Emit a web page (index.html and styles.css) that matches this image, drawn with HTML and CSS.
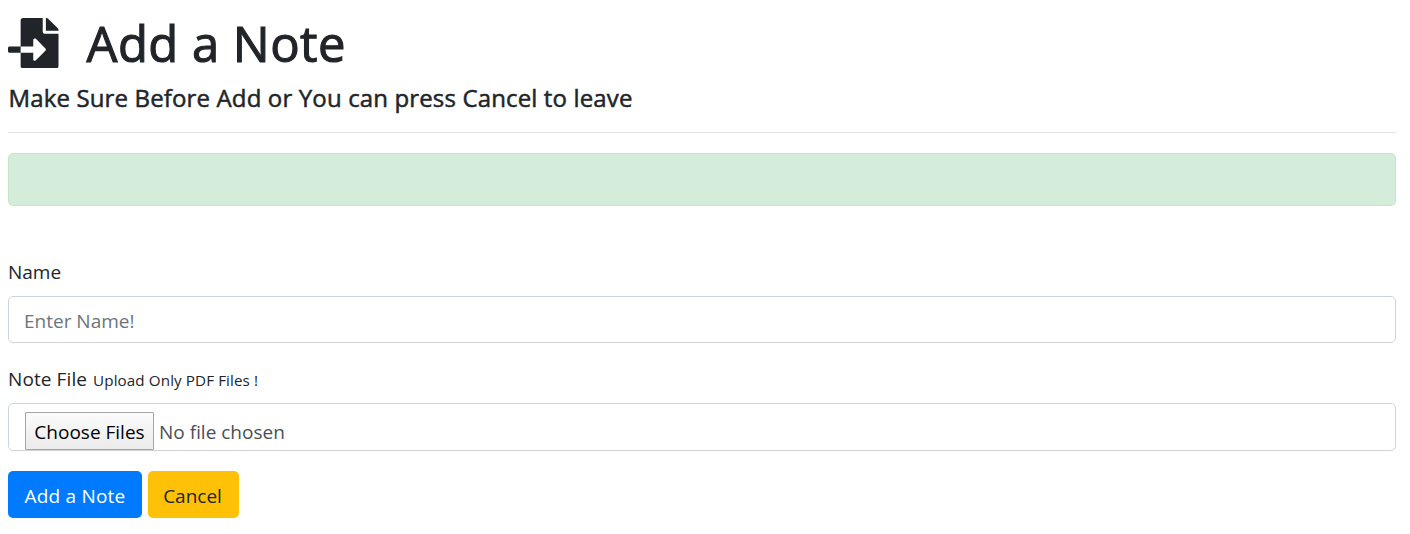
FILE: index.html
```
<!DOCTYPE html>
<html lang="en">
<head>
<meta charset="utf-8">
<title>Add a Note</title>
<link rel="stylesheet" href="styles.css">
</head>
<body>
<main class="page">
  <h1 class="title">
    <svg class="title-icon" viewBox="0 0 512 512" aria-hidden="true"><path fill="currentColor" d="M16 288c-8.8 0-16 7.2-16 16v32c0 8.8 7.2 16 16 16h112v-64zm489-183L407.1 7c-4.5-4.5-10.6-7-17-7H384v128h128v-6.1c0-6.3-2.5-12.4-7-16.9zm-153 31V0H152c-13.3 0-24 10.7-24 24v264h128v-65.2c0-14.3 17.3-21.4 27.4-11.3L379 308c6.6 6.7 6.6 17.4 0 24l-95.7 96.4c-10.1 10.1-27.4 3-27.4-11.3V352H128v136c0 13.3 10.7 24 24 24h336c13.3 0 24-10.7 24-24V160H376c-13.2 0-24-10.8-24-24z"/></svg>
    <span class="title-text">Add a Note</span>
  </h1>
  <h4 class="subtitle">Make Sure Before Add or You can press Cancel to leave</h4>
  <hr class="rule">
  <div class="alert"></div>
  <form class="form">
    <label class="label" for="name">Name</label>
    <input class="control name-input" id="name" type="text" placeholder="Enter Name!">
    <div class="label file-label"><span>Note File</span><small class="hint">Upload Only PDF Files !</small></div>
    <div class="control file-control">
      <button class="choose" type="button">Choose Files</button>
      <span class="file-status">No file chosen</span>
    </div>
    <div class="actions">
      <button class="btn btn-primary" type="button">Add a Note</button>
      <button class="btn btn-warning" type="button">Cancel</button>
    </div>
  </form>
</main>
</body>
</html>
```
FILE: styles.css
```
* { box-sizing: border-box; }
body {
  margin: 0;
  background: #fff;
  color: #212529;
  font: 400 19px/30px "Open Sans", "Noto Sans", sans-serif;
}
.page { padding: 14px 14px 0 8px; }
.title {
  display: flex;
  align-items: center;
  gap: 28px;
  height: 60px;
  margin: 0;
  font-size: 49px;
  font-weight: 400;
  line-height: 60px;
}
.title-icon { width: 50.5px; height: 50.5px; margin-top: -2px; }
.title-text {
  margin-top: -2px;
  letter-spacing: 0.45px;
  white-space: nowrap;
  -webkit-text-stroke: 1.1px currentColor;
}
.subtitle {
  height: 30px;
  margin: 9px 0 19px;
  padding-left: 0.5px;
  font-size: 24px;
  font-weight: 400;
  letter-spacing: 0.14px;
  line-height: 30px;
  white-space: nowrap;
  -webkit-text-stroke: 0.5px currentColor;
}
.rule { height: 1px; margin: 0 0 20px; border: 0; background: #e5e5e5; }
.alert {
  height: 53px;
  border: 1px solid #c3e6cb;
  border-radius: 5px;
  background: #d4edda;
}
.form { padding-top: 51px; }
.label { display: block; height: 30px; margin-bottom: 9px; }
.control {
  display: flex;
  width: 100%;
  height: 47px;
  padding: 2px 15px 0;
  border: 1px solid #ced4da;
  border-radius: 5px;
  background: #fff;
  color: #495057;
  font: inherit;
}
.name-input::placeholder { color: #6c757d; opacity: 1; }
.file-label { display: flex; align-items: baseline; gap: 6px; margin-top: 21px; letter-spacing: 0.1px; }
.hint { font-size: 15.2px; }
.file-control { align-items: flex-start; gap: 5px; height: 48px; padding: 8px 16px 0; }
.choose {
  width: 129px;
  height: 38px;
  padding: 2px 0 0;
  border: 1px solid #a6a6a6;
  border-radius: 1px;
  background: linear-gradient(#fbfbfb, #ebebeb);
  color: #000;
  font: inherit;
}
.file-status { line-height: 40px; }
.actions { display: flex; gap: 6px; margin-top: 20px; }
.btn {
  height: 47px;
  padding: 2px 0 0;
  border: 0;
  border-radius: 5px;
  font: inherit;
}
.btn-primary { width: 134px; background: #007bff; color: #fff; letter-spacing: 0.2px; }
.btn-warning { width: 91px; padding-right: 2px; background: #ffc107; color: #212529; }
```
